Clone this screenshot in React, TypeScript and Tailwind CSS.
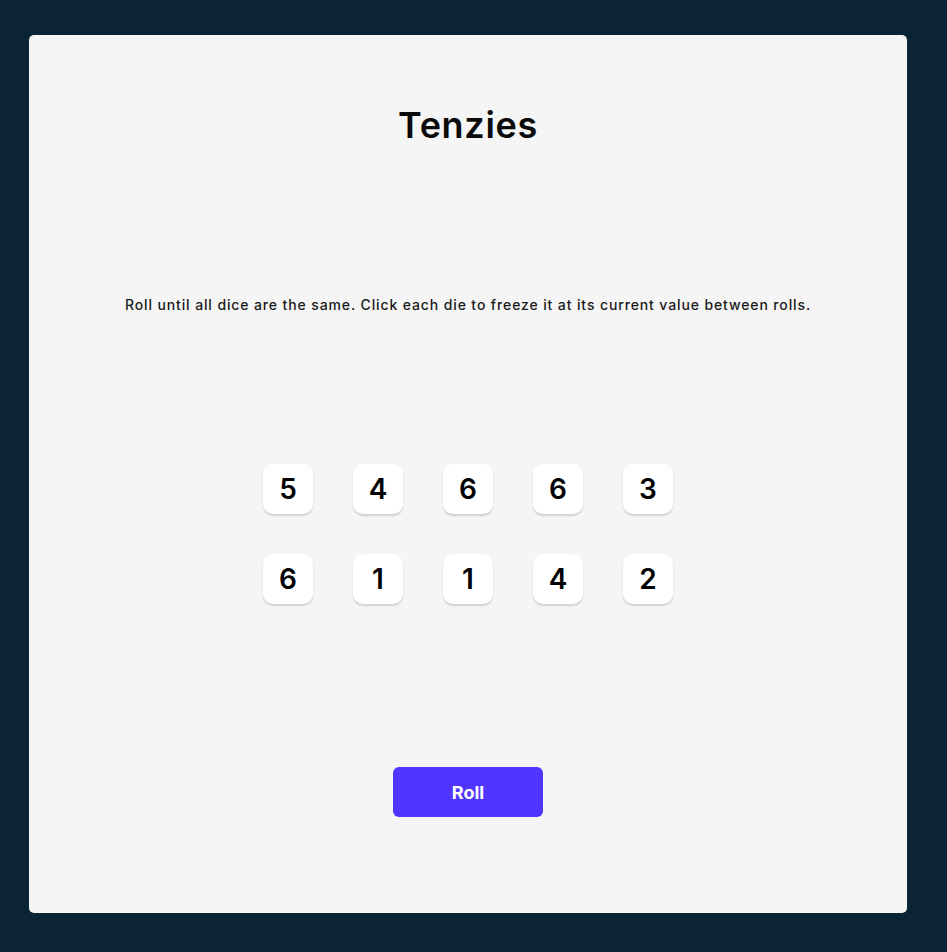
import React from "react";

const dice = [5, 4, 6, 6, 3, 6, 1, 1, 4, 2];

export default function App() {
  return (
    <div
      className="min-h-[952px] w-full bg-[#0B2434] pt-[35px] pl-[29px]"
      style={{ fontFamily: "Inter, 'Open Sans', sans-serif" }}
    >
      <main className="flex h-[878px] w-[878px] flex-col items-center rounded-[5px] bg-[#F5F5F5] pt-[66px]">
        <h1 className="h-[48px] text-[36px] font-semibold leading-[48px] tracking-[0.7px] text-[#0B0B0B]">
          Tenzies
        </h1>
        <p className="mt-[146px] h-[20px] text-[14px] font-medium leading-[20px] tracking-[0.88px] text-[#1a1a1a]">
          Roll until all dice are the same. Click each die to freeze it at its current value between rolls.
        </p>
        <div className="mt-[149px] grid grid-cols-5 gap-[40px]">
          {dice.map((d, i) => (
            <div
              key={i}
              className="flex h-[50px] w-[50px] items-center justify-center rounded-[10px] bg-white text-[28px] font-semibold text-black shadow-[0_2px_2px_rgba(0,0,0,0.15)]"
            >
              {d}
            </div>
          ))}
        </div>
        <button className="mt-[163px] h-[50px] w-[150px] rounded-[6px] bg-[#5035FF] text-[18px] font-bold text-white">
          Roll
        </button>
      </main>
    </div>
  );
}
